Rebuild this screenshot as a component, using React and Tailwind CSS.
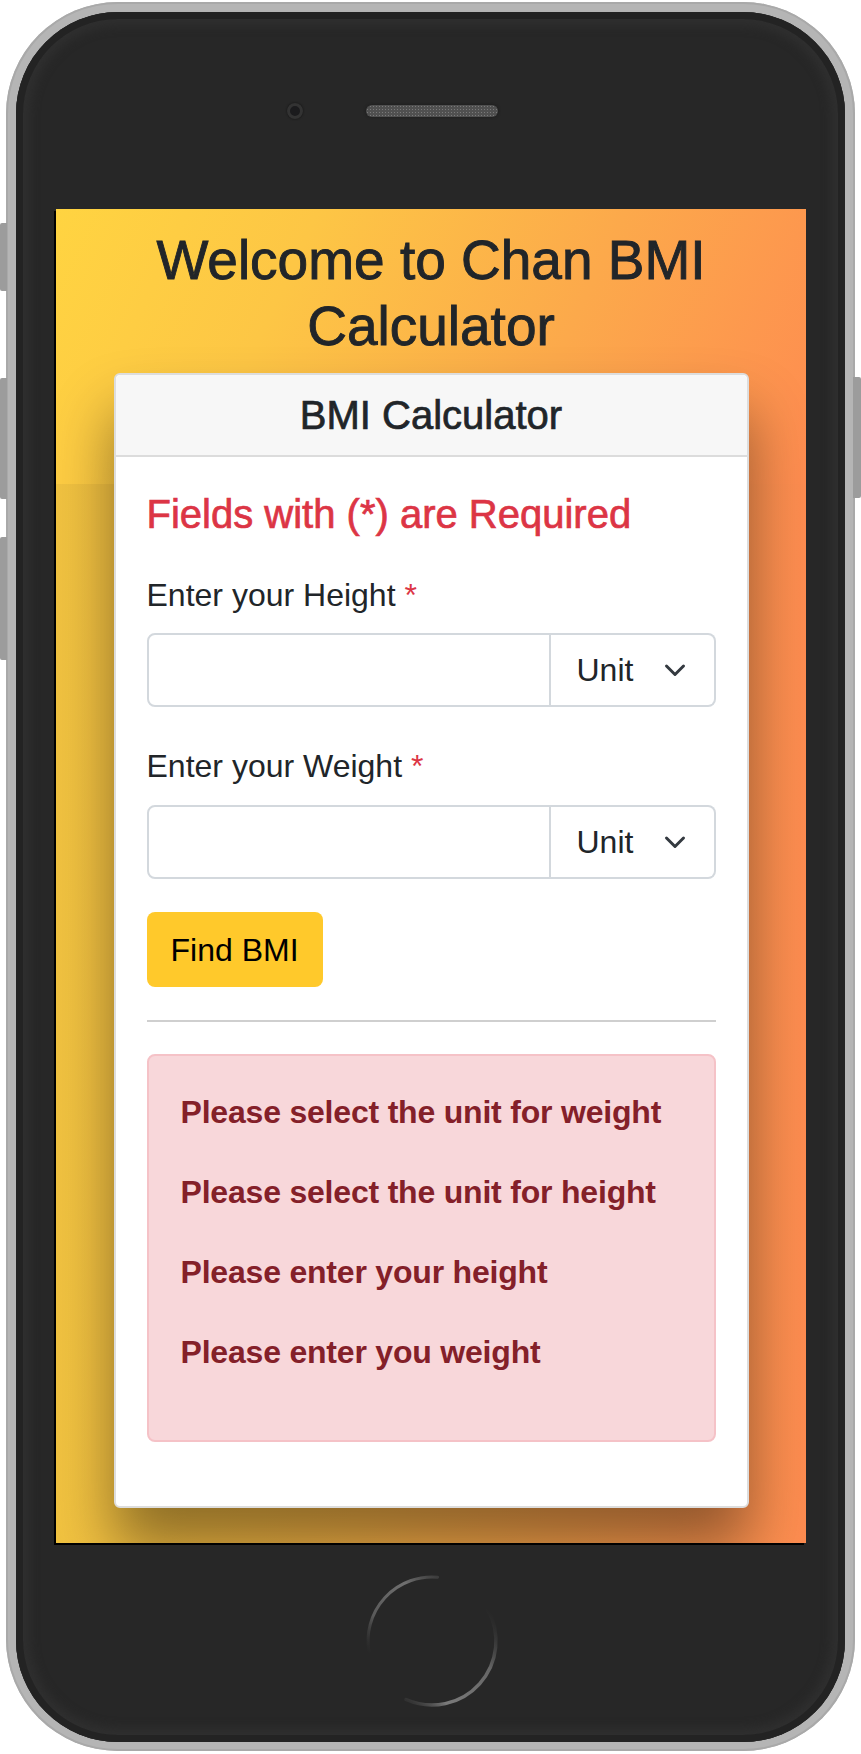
import React from "react";

function Chevron() {
  return (
    <svg width="24" height="24" viewBox="0 0 24 24" fill="none">
      <path d="M3.5 8 L12 16.5 L20.5 8" stroke="#343a40" strokeWidth="3" strokeLinecap="round" strokeLinejoin="round" />
    </svg>
  );
}

function Field({ label }) {
  return (
    <div className="text-[32px] leading-[48px] text-[#212529]">
      {label} <span className="text-[#dc3545]">*</span>
    </div>
  );
}

function InputGroup() {
  return (
    <div className="flex h-[74px] w-full">
      <input
        type="text"
        className="h-full w-[404px] border-2 border-[#d3d8dd] rounded-l-[8px] bg-white px-[24px] text-[32px] outline-none"
      />
      <div className="h-full flex-1 flex items-center justify-between border-2 border-l-0 border-[#d3d8dd] rounded-r-[8px] bg-white pl-[26px] pr-[27px]">
        <span className="text-[32px] leading-[48px] text-[#212529]">Unit</span>
        <Chevron />
      </div>
    </div>
  );
}

function HomeButton() {
  return (
    <svg width="140" height="140" viewBox="0 0 140 140" fill="none">
      <defs>
        <linearGradient id="hbA" gradientUnits="userSpaceOnUse" x1="75" y1="6" x2="7" y2="82">
          <stop offset="0" stopColor="#5e5e5e" stopOpacity="0.4" />
          <stop offset="0.25" stopColor="#6f6f6f" />
          <stop offset="0.7" stopColor="#5a5a5a" />
          <stop offset="1" stopColor="#3a3a3a" stopOpacity="0" />
        </linearGradient>
        <linearGradient id="hbB" gradientUnits="userSpaceOnUse" x1="126" y1="38" x2="44" y2="129">
          <stop offset="0" stopColor="#3a3a3a" stopOpacity="0" />
          <stop offset="0.35" stopColor="#666666" />
          <stop offset="0.8" stopColor="#7a7a7a" />
          <stop offset="1" stopColor="#4a4a4a" stopOpacity="0.3" />
        </linearGradient>
      </defs>
      <path d="M75.6 6.2 A64 64 0 0 0 7 81" stroke="url(#hbA)" strokeWidth="3" strokeLinecap="round" />
      <path d="M125.4 38 A64 64 0 0 1 44 128.5" stroke="url(#hbB)" strokeWidth="3.5" strokeLinecap="round" />
    </svg>
  );
}

export default function App() {
  return (
    <div className="relative w-[861px] h-[1754px] overflow-hidden bg-white pl-[6px] pt-[2px] font-['Liberation_Sans',Arial,sans-serif]">
      {/* side buttons */}
      <div className="absolute left-0 top-[223px] w-[7px] h-[68px] rounded-l-[2px] bg-[#9c9c9c]" />
      <div className="absolute left-0 top-[378px] w-[7px] h-[121px] rounded-l-[2px] bg-[#9c9c9c]" />
      <div className="absolute left-0 top-[537px] w-[7px] h-[123px] rounded-l-[2px] bg-[#9c9c9c]" />
      <div className="absolute right-0 top-[377px] w-[8px] h-[121px] rounded-r-[2px] bg-[#9c9c9c]" />

      {/* phone body */}
      <div className="w-[849px] h-[1749px] rounded-[112px] bg-[#b5b5b5] pt-[10px] pb-[9px] px-[10px] shadow-[inset_0_0_0_2px_#a9a9a9]">
        <div className="w-full h-full rounded-[102px] bg-[#272727] shadow-[inset_0_0_0_7px_#232323,inset_0_0_10px_14px_#2f2f2f] flex flex-col">
          {/* top area */}
          <div className="h-[197px] flex items-start pt-[91px] pl-[271px]">
            <div className="w-[16px] h-[16px] rounded-full bg-[#1b1b1d] border-[3px] border-[#333] shadow-[0_0_2px_#111]" />
            <div className="ml-[63px] mt-[2px] w-[132px] h-[12px] rounded-full bg-[#505050] bg-[radial-gradient(#7a7a7a_0.8px,transparent_1px)] bg-[length:3px_3px] shadow-[0_0_3px_#1a1a1a]" />
          </div>

          {/* screen */}
          <div className="ml-[40px] w-[750px] h-[1334px] overflow-hidden shadow-[-2px_2px_0_#000] [background:linear-gradient(115deg,#ffd441_0%,#fdc645_30%,#fca94b_65%,#fe8c50_100%)_top/100%_275px_no-repeat,linear-gradient(90deg,#f1c340_0%,#f7b346_40%,#fb9d4c_75%,#fd8c50_100%)] flex flex-col items-center">
            <h1 className="w-full px-[24px] pt-[18px] text-center text-[55px] leading-[66px] font-medium text-[#212529] [-webkit-text-stroke:0.9px_#212529]">
              Welcome to Chan BMI Calculator
            </h1>

            {/* card */}
            <div className="mt-[14px] w-[635px] rounded-[6px] border-2 border-[#dddddd] bg-white shadow-[0_40px_60px_rgba(0,0,0,0.42)]">
              <div className="rounded-t-[5px] border-b-2 border-[#dcdcdc] bg-[#f7f7f7] py-[16px] text-center text-[40px] leading-[48px] font-medium text-[#212529] [-webkit-text-stroke:0.7px_#212529]">
                BMI Calculator
              </div>
              <div className="px-[31px] pt-[33px] pb-[32px] flex flex-col">
                <div className="text-[40px] leading-[48px] font-medium text-[#dc3545] [-webkit-text-stroke:0.7px_#dc3545]">
                  Fields with (*) are Required
                </div>
                <div className="mt-[33px] mb-[14px]">
                  <Field label="Enter your Height" />
                </div>
                <InputGroup />
                <div className="mt-[35px] mb-[15px]">
                  <Field label="Enter your Weight" />
                </div>
                <InputGroup />
                <div className="mt-[33px] flex">
                  <button className="h-[75px] rounded-[8px] bg-[#ffc92b] px-[24px] text-[32px] leading-[48px] text-[#000]">
                    Find BMI
                  </button>
                </div>
                <div className="mt-[33px] h-[2px] w-full bg-[#cfcfcf]" />
                <div className="mt-[32px] mb-[32px] rounded-[8px] border-2 border-[#f5c2c7] bg-[#f8d7da] px-[32px] py-[32px] text-[#842029]">
                  <p className="text-[32px] leading-[48px] font-bold tracking-[-0.2px] mb-[32px]">Please select the unit for weight</p>
                  <p className="text-[32px] leading-[48px] font-bold tracking-[-0.2px] mb-[32px]">Please select the unit for height</p>
                  <p className="text-[32px] leading-[48px] font-bold tracking-[-0.2px] mb-[32px]">Please enter your height</p>
                  <p className="text-[32px] leading-[48px] font-bold tracking-[-0.2px] mb-[32px]">Please enter you weight</p>
                </div>
              </div>
            </div>
          </div>

          {/* home button */}
          <div className="flex justify-center pt-[28px] pl-[2px]">
            <HomeButton />
          </div>
        </div>
      </div>
    </div>
  );
}
